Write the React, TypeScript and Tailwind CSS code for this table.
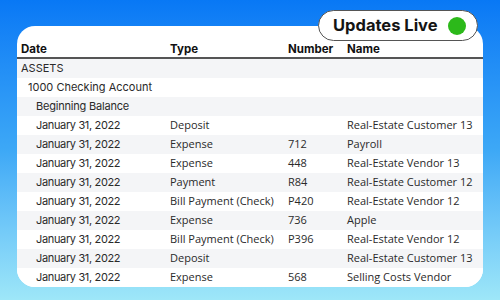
const ROWS: { date: string; type: string; num: string; name: string }[] = [
  { date: 'January 31, 2022', type: 'Deposit', num: '', name: 'Real-Estate Customer 13' },
  { date: 'January 31, 2022', type: 'Expense', num: '712', name: 'Payroll' },
  { date: 'January 31, 2022', type: 'Expense', num: '448', name: 'Real-Estate Vendor 13' },
  { date: 'January 31, 2022', type: 'Payment', num: 'R84', name: 'Real-Estate Customer 12' },
  { date: 'January 31, 2022', type: 'Bill Payment (Check)', num: 'P420', name: 'Real-Estate Vendor 12' },
  { date: 'January 31, 2022', type: 'Expense', num: '736', name: 'Apple' },
  { date: 'January 31, 2022', type: 'Bill Payment (Check)', num: 'P396', name: 'Real-Estate Vendor 12' },
  { date: 'January 31, 2022', type: 'Deposit', num: '', name: 'Real-Estate Customer 13' },
  { date: 'January 31, 2022', type: 'Expense', num: '568', name: 'Selling Costs Vendor' },
]

const GRID = 'grid grid-cols-[149px_118px_59px_1fr] pl-[4px]'

export default function App() {
  return (
    <div className="relative h-[300px] w-[500px] overflow-hidden bg-gradient-to-b from-[#0878f5] via-[#3da8f6] to-[#9ee7f8] font-['Inter',sans-serif]">
      {/* Card */}
      <div className="ml-[17px] mt-[26px] h-[261px] w-[466px] overflow-hidden rounded-[18px] bg-white text-[11px] text-[#2a2a2a]">
        <div className={`${GRID} h-[33px] items-end border-b-2 border-[#555] pb-[2px] text-[11.5px] leading-none font-bold text-[#111]`}>
          <div>Date</div>
          <div>Type</div>
          <div>Number</div>
          <div>Name</div>
        </div>
        <div className="flex h-[19px] items-center bg-[#f4f5f7] pl-[4px]">ASSETS</div>
        <div className="flex h-[19px] items-center bg-white pl-[11px]">1000 Checking Account</div>
        <div className="flex h-[19px] items-center bg-[#f4f5f7] pl-[19px] tracking-[-0.2px]">Beginning Balance</div>
        {ROWS.map((r, i) => (
          <div
            key={i}
            className={`${GRID} h-[19px] items-center ${i % 2 === 0 ? 'bg-white' : 'bg-[#f4f5f7]'}`}
          >
            <div className="pl-[15px] tracking-[-0.35px]">{r.date}</div>
            <div className="font-['Open_Sans',sans-serif]">{r.type}</div>
            <div className="font-['Open_Sans',sans-serif]">{r.num}</div>
            <div className="font-['Open_Sans',sans-serif]">{r.name}</div>
          </div>
        ))}
      </div>

      {/* Live badge */}
      <div className="absolute left-[318px] top-[10px] flex h-[31px] w-[160px] items-center justify-between rounded-full border border-[#555] bg-white pl-[14px] pr-[11px]">
        <span className="text-[16.5px] font-bold text-[#141414]">Updates Live</span>
        <span className="h-[18px] w-[18px] rounded-full bg-[#2cb91a]" />
      </div>
    </div>
  )
}
